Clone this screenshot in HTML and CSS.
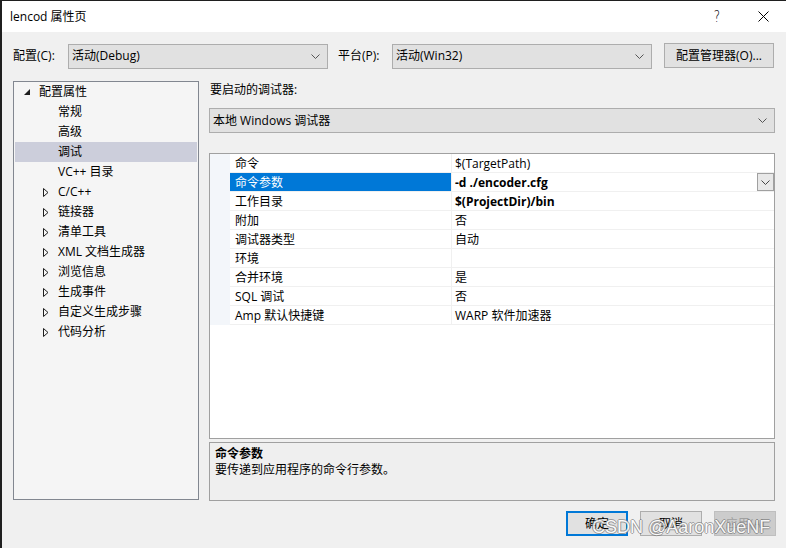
FILE: index.html
```html
<!DOCTYPE html>
<html lang="zh-CN">
<head>
<meta charset="utf-8">
<title>lencod 属性页</title>
<link rel="stylesheet" href="styles.css">
</head>
<body>
<div class="window">
  <div class="titlebar">
    <span class="title">lencod 属性页</span>
    <div class="controls">
      <span class="ctl help">?</span>
      <span class="ctl close">
        <svg width="11" height="11" viewBox="0 0 11 11"><path d="M0.5 0.5 L10.5 10.5 M10.5 0.5 L0.5 10.5" stroke="#000" stroke-width="1" fill="none"/></svg>
      </span>
    </div>
  </div>

  <div class="configrow">
    <span class="lbl lbl-config">配置(C):</span>
    <div class="select sel-config"><span>活动(Debug)</span><svg class="chev" width="9" height="5" viewBox="0 0 9 5"><path d="M0.5 0.5 L4.5 4.5 L8.5 0.5" stroke="#555" fill="none"/></svg></div>
    <span class="lbl lbl-plat">平台(P):</span>
    <div class="select sel-plat"><span>活动(Win32)</span><svg class="chev" width="9" height="5" viewBox="0 0 9 5"><path d="M0.5 0.5 L4.5 4.5 L8.5 0.5" stroke="#555" fill="none"/></svg></div>
    <div class="btn btn-mgr">配置管理器(O)...</div>
  </div>

  <div class="main">
    <div class="tree">
      <div class="trow lv0"><span class="tog"><svg width="6" height="6" viewBox="0 0 6 6"><path d="M6 0 L6 6 L0 6 Z" fill="#1e1e1e"/></svg></span>配置属性</div>
      <div class="trow lv1"><span class="tog"></span>常规</div>
      <div class="trow lv1"><span class="tog"></span>高级</div>
      <div class="trow lv1 sel"><span class="tog"></span>调试</div>
      <div class="trow lv1"><span class="tog"></span>VC++ 目录</div>
      <div class="trow lv1"><span class="tog"><svg width="6" height="9" viewBox="0 0 6 9"><path d="M0.5 0.5 L5 4.5 L0.5 8.5 Z" fill="none" stroke="#1e1e1e"/></svg></span>C/C++</div>
      <div class="trow lv1"><span class="tog"><svg width="6" height="9" viewBox="0 0 6 9"><path d="M0.5 0.5 L5 4.5 L0.5 8.5 Z" fill="none" stroke="#1e1e1e"/></svg></span>链接器</div>
      <div class="trow lv1"><span class="tog"><svg width="6" height="9" viewBox="0 0 6 9"><path d="M0.5 0.5 L5 4.5 L0.5 8.5 Z" fill="none" stroke="#1e1e1e"/></svg></span>清单工具</div>
      <div class="trow lv1"><span class="tog"><svg width="6" height="9" viewBox="0 0 6 9"><path d="M0.5 0.5 L5 4.5 L0.5 8.5 Z" fill="none" stroke="#1e1e1e"/></svg></span>XML 文档生成器</div>
      <div class="trow lv1"><span class="tog"><svg width="6" height="9" viewBox="0 0 6 9"><path d="M0.5 0.5 L5 4.5 L0.5 8.5 Z" fill="none" stroke="#1e1e1e"/></svg></span>浏览信息</div>
      <div class="trow lv1"><span class="tog"><svg width="6" height="9" viewBox="0 0 6 9"><path d="M0.5 0.5 L5 4.5 L0.5 8.5 Z" fill="none" stroke="#1e1e1e"/></svg></span>生成事件</div>
      <div class="trow lv1"><span class="tog"><svg width="6" height="9" viewBox="0 0 6 9"><path d="M0.5 0.5 L5 4.5 L0.5 8.5 Z" fill="none" stroke="#1e1e1e"/></svg></span>自定义生成步骤</div>
      <div class="trow lv1"><span class="tog"><svg width="6" height="9" viewBox="0 0 6 9"><path d="M0.5 0.5 L5 4.5 L0.5 8.5 Z" fill="none" stroke="#1e1e1e"/></svg></span>代码分析</div>
    </div>

    <div class="right">
      <div class="rlabel">要启动的调试器:</div>
      <div class="select sel-dbg"><span>本地 Windows 调试器</span><svg class="chev" width="9" height="5" viewBox="0 0 9 5"><path d="M0.5 0.5 L4.5 4.5 L8.5 0.5" stroke="#555" fill="none"/></svg></div>

      <div class="grid">
        <div class="prow"><span class="gut"></span><span class="pname">命令</span><span class="pval">$(TargetPath)</span></div>
        <div class="prow psel"><span class="gut"></span><span class="pname">命令参数</span><span class="pval bold">-d ./encoder.cfg<span class="ddbtn"><svg width="9" height="5" viewBox="0 0 9 5"><path d="M0.5 0.5 L4.5 4.5 L8.5 0.5" stroke="#444" fill="none"/></svg></span></span></div>
        <div class="prow"><span class="gut"></span><span class="pname">工作目录</span><span class="pval bold">$(ProjectDir)/bin</span></div>
        <div class="prow"><span class="gut"></span><span class="pname">附加</span><span class="pval">否</span></div>
        <div class="prow"><span class="gut"></span><span class="pname">调试器类型</span><span class="pval">自动</span></div>
        <div class="prow"><span class="gut"></span><span class="pname">环境</span><span class="pval"></span></div>
        <div class="prow"><span class="gut"></span><span class="pname">合并环境</span><span class="pval">是</span></div>
        <div class="prow"><span class="gut"></span><span class="pname">SQL 调试</span><span class="pval">否</span></div>
        <div class="prow"><span class="gut"></span><span class="pname">Amp 默认快捷键</span><span class="pval">WARP 软件加速器</span></div>
      </div>

      <div class="desc">
        <div class="dtitle">命令参数</div>
        <div class="dtext">要传递到应用程序的命令行参数。</div>
      </div>
    </div>
  </div>

  <div class="btnrow">
    <div class="btn dlg default">确定</div>
    <div class="btn dlg">取消</div>
    <div class="btn dlg disabled">应用(A)</div>
  </div>

  <div class="watermark">CSDN @AaronXueNF</div>
</div>
</body>
</html>
```

FILE: styles.css
```css
html, body {
  margin: 0;
  padding: 0;
}
body {
  background: #1f1f1f;
  width: 786px;
  height: 548px;
  overflow: hidden;
  font-family: "Open Sans", "Noto Sans CJK SC", sans-serif;
  font-size: 12px;
  color: #000;
}
.window {
  position: relative;
  margin: 1px 0 0 2px;
  width: 784px;
  height: 547px;
  background: #f0f0f0;
  display: flex;
  flex-direction: column;
}
.titlebar {
  height: 31px;
  background: #fff;
  display: flex;
  align-items: center;
  justify-content: space-between;
  padding-left: 8px;
}
.title {
  font-size: 12px;
  line-height: 16px;
}
.controls {
  display: flex;
  height: 31px;
}
.ctl {
  width: 46px;
  display: flex;
  align-items: center;
  justify-content: center;
}
.help {
  font-family: "DejaVu Sans", sans-serif;
  font-size: 15px;
  font-weight: 300;
  transform: scaleX(0.8);
}
.configrow {
  display: flex;
  align-items: center;
  padding: 11px 11px 0 11px;
  height: 26px;
}
.lbl {
  line-height: 16px;
}
.lbl-config { width: 55px; }
.lbl-plat { width: 54px; margin-left: 10px; }
.select {
  box-sizing: border-box;
  height: 25px;
  border: 1px solid #adadad;
  background: #e1e1e1;
  display: flex;
  align-items: center;
  justify-content: space-between;
  padding: 0 7px 0 3px;
  line-height: 16px;
}
.sel-config, .sel-plat { width: 260px; }
.btn {
  box-sizing: border-box;
  border: 1px solid #adadad;
  background: #e1e1e1;
  display: flex;
  align-items: center;
  justify-content: center;
  line-height: 16px;
}
.btn-mgr {
  width: 110px;
  height: 25px;
  margin-left: 12px;
  margin-top: -1px;
}
.main {
  display: flex;
  gap: 10px;
  padding: 0 11px;
  margin-top: 12px;
  height: 420px;
}
.tree {
  box-sizing: border-box;
  width: 186px;
  height: 419px;
  border: 1px solid #828790;
  background: #f5f5f5;
  padding: 0 1px;
}
.trow {
  height: 20px;
  display: flex;
  align-items: center;
  line-height: 16px;
  white-space: nowrap;
}
.trow.lv0 { padding-left: 5px; }
.trow.lv1 { padding-left: 24px; }
.trow.sel { background: #cccedb; }
.tog {
  width: 14px;
  margin-right: 5px;
  display: flex;
  align-items: center;
  justify-content: center;
}
.right {
  width: 566px;
  display: flex;
  flex-direction: column;
}
.rlabel {
  line-height: 16px;
  padding-left: 1px;
  padding-top: 1px;
}
.sel-dbg {
  margin-top: 10px;
  width: 566px;
  padding-left: 3px;
}
.grid {
  box-sizing: border-box;
  margin-top: 20px;
  height: 286px;
  border: 1px solid #a0a0a0;
  background: #fff;
}
.prow {
  display: grid;
  grid-template-columns: 20px 222px 1fr;
  height: 19px;
}
.gut {
  background: #f3f6fa;
}
.pname, .pval {
  box-sizing: border-box;
  border-bottom: 1px solid #f0f0f0;
  padding-top: 2px;
  line-height: 16px;
  white-space: nowrap;
}
.pname {
  border-right: 1px solid #f0f0f0;
  padding-left: 5px;
}
.pval {
  padding-left: 3px;
  position: relative;
}
.psel .pname {
  background: #0078d7;
  color: #fff;
}
.bold { font-weight: 700; }
.ddbtn {
  position: absolute;
  right: 0;
  top: 0;
  box-sizing: border-box;
  width: 17px;
  height: 18px;
  border: 1px solid #a0a0a0;
  background: #e8e8e8;
  display: flex;
  align-items: center;
  justify-content: center;
}
.desc {
  box-sizing: border-box;
  margin-top: 3px;
  height: 59px;
  border: 1px solid #a0a0a0;
  background: #efefef;
  padding: 3px 5px;
}
.dtitle {
  font-weight: 700;
  line-height: 16px;
}
.dtext {
  line-height: 16px;
}
.btnrow {
  display: flex;
  justify-content: flex-end;
  gap: 12px;
  padding: 0 10px 0 0;
  margin-top: 10px;
}
.btn.dlg {
  width: 62px;
  height: 25px;
}
.btn.default {
  border: 2px solid #0078d7;
}
.btn.disabled {
  background: #cccccc;
  border-color: #bfbfbf;
  color: #a0a0a0;
}
.watermark {
  position: absolute;
  left: 590px;
  top: 516px;
  font-family: "Liberation Sans", sans-serif;
  font-size: 18px;
  color: #ffffff;
  text-shadow: 1px 0 0 rgba(110,110,110,0.7), -1px 0 0 rgba(110,110,110,0.7), 0 1px 0 rgba(110,110,110,0.7), 0 -1px 0 rgba(110,110,110,0.7);
  opacity: 0.85;
  white-space: nowrap;
  pointer-events: none;
}
```
